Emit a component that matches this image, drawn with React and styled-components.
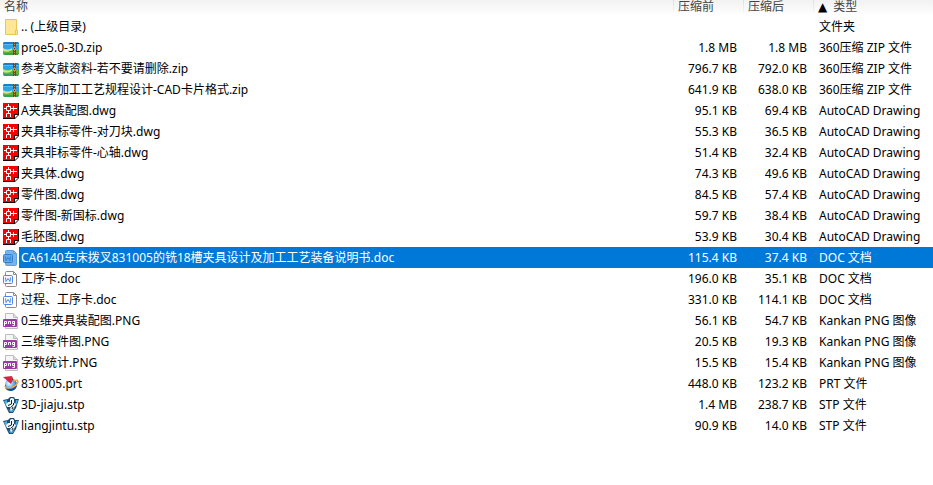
import React, { useState } from "react";
import styled, { createGlobalStyle } from "styled-components";

const files = [
  { icon: "folder", name: ".. (上级目录)", before: "", after: "", type: "文件夹" },
  { icon: "zip", name: "proe5.0-3D.zip", before: "1.8 MB", after: "1.8 MB", type: "360压缩 ZIP 文件" },
  { icon: "zip", name: "参考文献资料-若不要请删除.zip", before: "796.7 KB", after: "792.0 KB", type: "360压缩 ZIP 文件" },
  { icon: "zip", name: "全工序加工工艺规程设计-CAD卡片格式.zip", before: "641.9 KB", after: "638.0 KB", type: "360压缩 ZIP 文件" },
  { icon: "dwg", name: "A夹具装配图.dwg", before: "95.1 KB", after: "69.4 KB", type: "AutoCAD Drawing" },
  { icon: "dwg", name: "夹具非标零件-对刀块.dwg", before: "55.3 KB", after: "36.5 KB", type: "AutoCAD Drawing" },
  { icon: "dwg", name: "夹具非标零件-心轴.dwg", before: "51.4 KB", after: "32.4 KB", type: "AutoCAD Drawing" },
  { icon: "dwg", name: "夹具体.dwg", before: "74.3 KB", after: "49.6 KB", type: "AutoCAD Drawing" },
  { icon: "dwg", name: "零件图.dwg", before: "84.5 KB", after: "57.4 KB", type: "AutoCAD Drawing" },
  { icon: "dwg", name: "零件图-新国标.dwg", before: "59.7 KB", after: "38.4 KB", type: "AutoCAD Drawing" },
  { icon: "dwg", name: "毛胚图.dwg", before: "53.9 KB", after: "30.4 KB", type: "AutoCAD Drawing" },
  { icon: "doc", name: "CA6140车床拨叉831005的铣18槽夹具设计及加工工艺装备说明书.doc", before: "115.4 KB", after: "37.4 KB", type: "DOC 文档" },
  { icon: "doc", name: "工序卡.doc", before: "196.0 KB", after: "35.1 KB", type: "DOC 文档" },
  { icon: "doc", name: "过程、工序卡.doc", before: "331.0 KB", after: "114.1 KB", type: "DOC 文档" },
  { icon: "png", name: "0三维夹具装配图.PNG", before: "56.1 KB", after: "54.7 KB", type: "Kankan PNG 图像" },
  { icon: "png", name: "三维零件图.PNG", before: "20.5 KB", after: "19.3 KB", type: "Kankan PNG 图像" },
  { icon: "png", name: "字数统计.PNG", before: "15.5 KB", after: "15.4 KB", type: "Kankan PNG 图像" },
  { icon: "prt", name: "831005.prt", before: "448.0 KB", after: "123.2 KB", type: "PRT 文件" },
  { icon: "stp", name: "3D-jiaju.stp", before: "1.4 MB", after: "238.7 KB", type: "STP 文件" },
  { icon: "stp", name: "liangjintu.stp", before: "90.9 KB", after: "14.0 KB", type: "STP 文件" },
];

function FileIcon({ kind, selected }) {
  const edge = selected ? "#5ba2df" : "#8b8b8b";
  const mark = selected ? "#2f80cf" : "#4a86e8";

  switch (kind) {
    case "folder":
      return (
        <Icon viewBox="0 0 16 16">
          <path d="M2.5 .5h11v11h1v4h-12z" fill="#ffe694" stroke="#e9c35c" />
          <path d="M12.5 15v-4h2" fill="none" stroke="#e9c35c" />
        </Icon>
      );
    case "zip":
      return (
        <Icon viewBox="0 0 16 16">
          <path d="M0 3l1-1h14l1 1v2H0z" fill="#1b7fc0" />
          <path d="M0 4h16v5H0z" fill="#2ba5e6" />
          <path d="M0 4h16v1H0z" fill="#56bdf2" />
          <path d="M0 9h16v4l-1 2H1l-1-2z" fill="#5fb43a" />
          <path d="M0 8q5 3 9 0v2q-4 3-9 1z" fill="#c4e88a" />
          <path d="M0 13h16l-1 2H1z" fill="#3a9d5c" />
          <path d="M10 2h3v13h-3z" fill="#7a4527" />
          <path d="M11.5 2v13" stroke="#c78a4a" strokeDasharray="1 1" />
          <path d="M10 7h3v3h-3z" fill="#d98a43" />
          <path d="M11 8h1v1h-1z" fill="#5a2c14" />
        </Icon>
      );
    case "dwg":
      return (
        <Icon viewBox="0 0 16 16">
          <path d="M0 0h16v12l-4 4H0z" fill="#1a0000" />
          <path d="M0 0h15v11h-4v4H0z" fill="#f80000" />
          <path
            d="M5.5 1v2M3.500 3.500h4v4h-4zM1 5.500h2M8 5.500h6M10.500 3v5M5.500 8v2M3.500 14v-3.500h4V14"
            fill="none"
            stroke="#fff"
          />
          <path d="M12 12h3l-3 3z" fill="#fff" />
        </Icon>
      );
    case "doc":
      return (
        <Icon viewBox="0 0 16 16">
          <path
            d="M2.5 1.500q0-1 1-1h7l3 3v11q0 1-1 1h-9q-1 0-1-1z"
            fill={selected ? "#78b4e9" : "#fff"}
            stroke={edge}
          />
          <path d="M10.5 .5v3h3" fill="none" stroke={edge} />
          <rect
            x=".5"
            y="4.5"
            width="9"
            height="8"
            rx="1"
            fill={selected ? "#65a9e8" : "#f5f9ff"}
            stroke={mark}
          />
          <path d="M2.500 6.500l.5 4 2-3 2 3 .5-4" fill="none" stroke={mark} />
        </Icon>
      );
    case "png":
      return (
        <Icon viewBox="0 0 16 16">
          <path d="M2.5 .5h8l4 4v11h-12z" fill="#f6f6f6" stroke="#bdbdbd" />
          <path d="M10.5 .5v4h4" fill="#ddd" stroke="#bdbdbd" />
          <rect y="6" width="14" height="8" rx="1" fill="#9b3aa2" />
          <path
            d="M1.500 13V8.500h2v2h-2M5.500 11V8.500h2V11M11.500 8v4.500h-2M11 8.500H9.500v2H11"
            fill="none"
            stroke="#fff"
          />
        </Icon>
      );
    case "prt":
      return (
        <Icon viewBox="0 0 16 16">
          <defs>
            <radialGradient id="ball" cx=".35" cy=".4" r=".7">
              <stop offset="0" stopColor="#f4fbff" />
              <stop offset=".4" stopColor="#8cc8f2" />
              <stop offset="1" stopColor="#0c4fae" />
            </radialGradient>
          </defs>
          <circle cx="8" cy="8.500" r="6" fill="url(#ball)" />
          <path
            d="M2 8q-1 6 5 7 6 0 7-6-3 4-7 4-4-1-5-5z"
            fill="#0d4ba8"
          />
          <path
            d="M11 4.500q4-1 4 1c0 3-6 7-11 6.500q-2-.5-2-2"
            fill="none"
            stroke="#f3a63a"
            strokeWidth="1.500"
          />
          <path d="M0 1l9-1-1 8z" fill="#e0203a" />
          <path d="M8 8l1-8 1 3z" fill="#8d1527" />
        </Icon>
      );
    default:
      return (
        <Icon viewBox="0 0 16 16">
          <path d="M0 3l5-1 2-2h4l1 2h4l-3 9-3 5H6l-2-4z" fill="#1d4c6d" />
          <path d="M1 4l3-1v6l-1 0zM13 3h2l-2 6-1-1z" fill="#45b3e6" />
          <path d="M5 12l2 1h3l2-2-2 4H7z" fill="#3f9ccc" />
          <path d="M7 2q2-2 4 0v4l2 1-2 4-3 3-1-2 1-2H4l-1-3 2-2h2z" fill="#eef6fa" />
          <path
            d="M8.500 3v4L5 8.500M8 10l2.500-2V6M9 12l1-2"
            fill="none"
            stroke="#14222c"
          />
        </Icon>
      );
  }
}

export default function App() {
  const [selected, setSelected] = useState(11);

  return (
    <>
      <GlobalStyle />
      <FileTable>
        <colgroup>
          <IconCol />
          <col />
          <SizeCol />
          <SizeCol />
          <TypeCol />
        </colgroup>
        <thead>
          <tr>
            <NameHead colSpan={2}>名称</NameHead>
            <Head>压缩前</Head>
            <Head>压缩后</Head>
            <Head aria-sort="ascending">
              <SortMark>▲</SortMark>类型
            </Head>
          </tr>
        </thead>
        <tbody>
          {files.map((file, i) => (
            <FileRow
              key={file.name}
              $selected={selected === i}
              onClick={() => setSelected(i)}
            >
              <IconCell>
                <FileIcon kind={file.icon} selected={selected === i} />
              </IconCell>
              <NameCell>{file.name}</NameCell>
              <SizeCell>{file.before}</SizeCell>
              <SizeCell>{file.after}</SizeCell>
              <TypeCell>{file.type}</TypeCell>
            </FileRow>
          ))}
        </tbody>
      </FileTable>
    </>
  );
}

const GlobalStyle = createGlobalStyle`
  body {
    margin: 0;
    background: #fff;
    color: #000;
    font-family: "Noto Sans", "Noto Sans CJK SC", sans-serif;
    font-size: 12px;
  }
`;

const FileTable = styled.table`
  width: 100%;
  table-layout: fixed;
  border-collapse: collapse;
  cursor: default;

  thead {
    background: linear-gradient(#f2f2f2, #fff);
  }
`;

const IconCol = styled.col`
  width: 19px;
`;

const SizeCol = styled.col`
  width: 70px;
`;

const TypeCol = styled.col`
  width: 120px;
`;

const Head = styled.th`
  height: 16px;
  padding: 0 5px;
  background: linear-gradient(#dedede, #f5f5f5) left top / 1px 12px no-repeat;
  color: #444;
  font-weight: 400;
  line-height: 13px;
  text-align: left;
  vertical-align: top;
  white-space: nowrap;
`;

const NameHead = styled(Head)`
  padding-left: 4px;
  background: none;
`;

const SortMark = styled.span`
  margin-right: 6px;
  color: #000;
  font-family: "DejaVu Sans", sans-serif;
`;

const Cell = styled.td`
  height: 21px;
  padding: 0;
  line-height: 20px;
  overflow: hidden;
  text-overflow: ellipsis;
  white-space: nowrap;
`;

const IconCell = styled(Cell)`
  padding-left: 3px;
`;

const NameCell = styled(Cell)`
  padding-left: 2px;
`;

const SizeCell = styled(Cell)`
  padding-right: 6px;
  text-align: right;
`;

const TypeCell = styled(Cell)`
  padding-left: 6px;
`;

const FileRow = styled.tr`
  color: ${({ $selected }) => ($selected ? "#fff" : "#000")};

  ${NameCell}, ${SizeCell}, ${TypeCell} {
    background: ${({ $selected }) => ($selected ? "#0078d7" : "transparent")};
  }
`;

const Icon = styled.svg`
  display: block;
  width: 16px;
  height: 16px;
`;
